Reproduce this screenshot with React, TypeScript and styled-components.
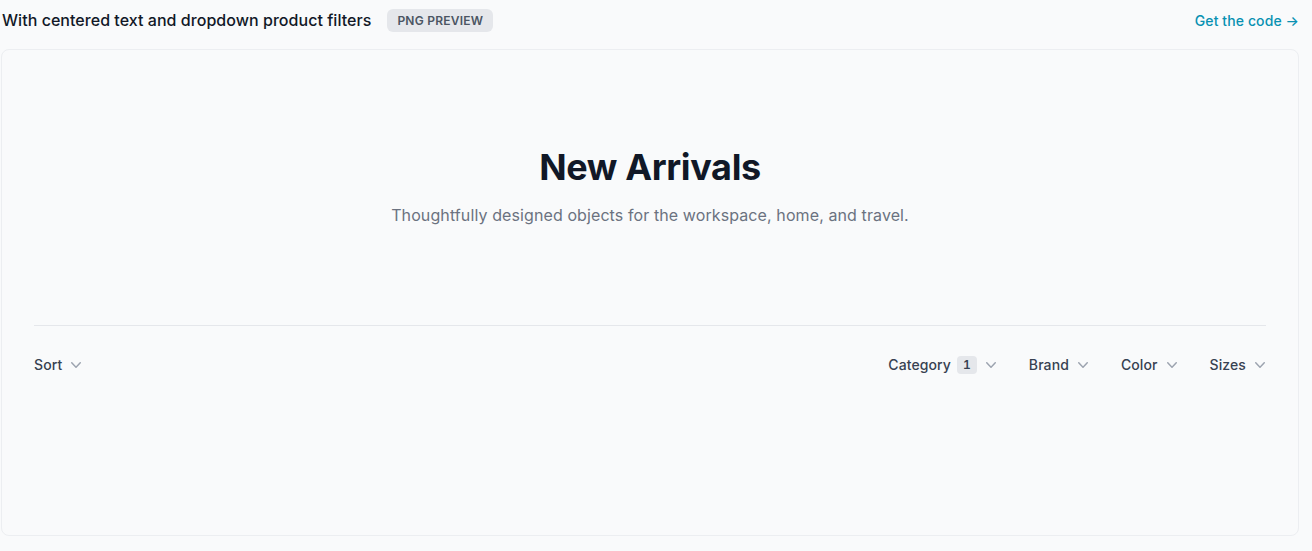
import React from 'react';
import styled, {createGlobalStyle} from 'styled-components';

const GlobalStyle = createGlobalStyle`
  html, body {
    margin: 0;
    padding: 0;
    background: #f9fafb;
    font-family: Inter, "Noto Sans", sans-serif;
  }
  * {
    box-sizing: border-box;
  }
`;

const Page = styled.div`
  width: 1298px;
  margin-left: 1px;
`;

const TopBar = styled.div`
  display: flex;
  align-items: center;
  justify-content: space-between;
  height: 40px;
  margin-bottom: 9px;
`;

const TitleGroup = styled.div`
  display: flex;
  align-items: center;
  gap: 16px;
  margin-left: 1px;
`;

const PreviewTitle = styled.h2`
  margin: 0;
  font-size: 16px;
  font-weight: 500;
  line-height: 24px;
  letter-spacing: 0.04px;
  color: #111827;
`;

const Badge = styled.span`
  display: inline-flex;
  align-items: center;
  height: 23px;
  padding: 0 10px;
  border-radius: 6px;
  background: #e5e7eb;
  color: #4b5563;
  font-size: 12px;
  font-weight: 600;
  letter-spacing: 0.02em;
  text-transform: uppercase;
`;

const CodeLink = styled.a`
  font-size: 14px;
  font-weight: 500;
  letter-spacing: 0.1px;
  color: #0891b2;
  text-decoration: none;
`;

const Card = styled.div`
  height: 487px;
  border: 1px solid #eceef1;
  border-radius: 8px;
  background: #f9fafb;
  overflow: hidden;
`;

const Hero = styled.div`
  padding: 97px 32px 98px;
  text-align: center;
`;

const Heading = styled.h1`
  margin: 0;
  font-size: 36px;
  line-height: 40px;
  font-weight: 700;
  letter-spacing: -0.01em;
  color: #111827;
`;

const Lead = styled.p`
  max-width: 576px;
  margin: 16px auto 0;
  font-size: 16px;
  line-height: 24px;
  letter-spacing: 0.1px;
  color: #6b7280;
`;

const FilterBar = styled.section`
  display: flex;
  align-items: center;
  justify-content: space-between;
  margin: 0 32px;
  padding-top: 29px;
  border-top: 1px solid #e5e7eb;
`;

const FilterGroup = styled.div`
  display: flex;
  align-items: center;
  gap: 32px;
`;

const FilterButton = styled.button`
  display: inline-flex;
  align-items: center;
  padding: 0;
  border: 0;
  background: none;
  font-family: inherit;
  font-size: 14px;
  line-height: 20px;
  font-weight: 500;
  letter-spacing: 0.1px;
  color: #374151;
  cursor: pointer;
`;

const Count = styled.span`
  margin-left: 6px;
  padding: 1px 6px;
  border-radius: 4px;
  background: #e5e7eb;
  font-size: 12px;
  line-height: 16px;
  font-weight: 600;
  color: #374151;
  font-variant-numeric: tabular-nums;
`;

const Chevron = styled.svg`
  width: 20px;
  height: 20px;
  margin: 0 -4px 0 4px;
  fill: #9ca3af;
`;

const ChevronDown = () => (
  <Chevron viewBox="0 0 20 20" aria-hidden="true">
    <path
      fillRule="evenodd"
      d="M5.23 7.21a.75.75 0 011.06.02L10 11.168l3.71-3.938a.75.75 0 111.08 1.04l-4.25 4.5a.75.75 0 01-1.08 0l-4.25-4.5a.75.75 0 01.02-1.06z"
      clipRule="evenodd"
    />
  </Chevron>
);

const filters: {name: string; count?: number}[] = [
  {name: 'Category', count: 1},
  {name: 'Brand'},
  {name: 'Color'},
  {name: 'Sizes'},
];

export default function App() {
  return (
    <>
      <GlobalStyle />
      <Page>
        <TopBar>
          <TitleGroup>
            <PreviewTitle>With centered text and dropdown product filters</PreviewTitle>
            <Badge>PNG Preview</Badge>
          </TitleGroup>
          <CodeLink href="#">Get the code →</CodeLink>
        </TopBar>
        <Card>
          <Hero>
            <Heading>New Arrivals</Heading>
            <Lead>Thoughtfully designed objects for the workspace, home, and travel.</Lead>
          </Hero>
          <FilterBar>
            <FilterButton>
              Sort
              <ChevronDown />
            </FilterButton>
            <FilterGroup>
              {filters.map(({name, count}) => (
                <FilterButton key={name}>
                  {name}
                  {count ? <Count>{count}</Count> : null}
                  <ChevronDown />
                </FilterButton>
              ))}
            </FilterGroup>
          </FilterBar>
        </Card>
      </Page>
    </>
  );
}
